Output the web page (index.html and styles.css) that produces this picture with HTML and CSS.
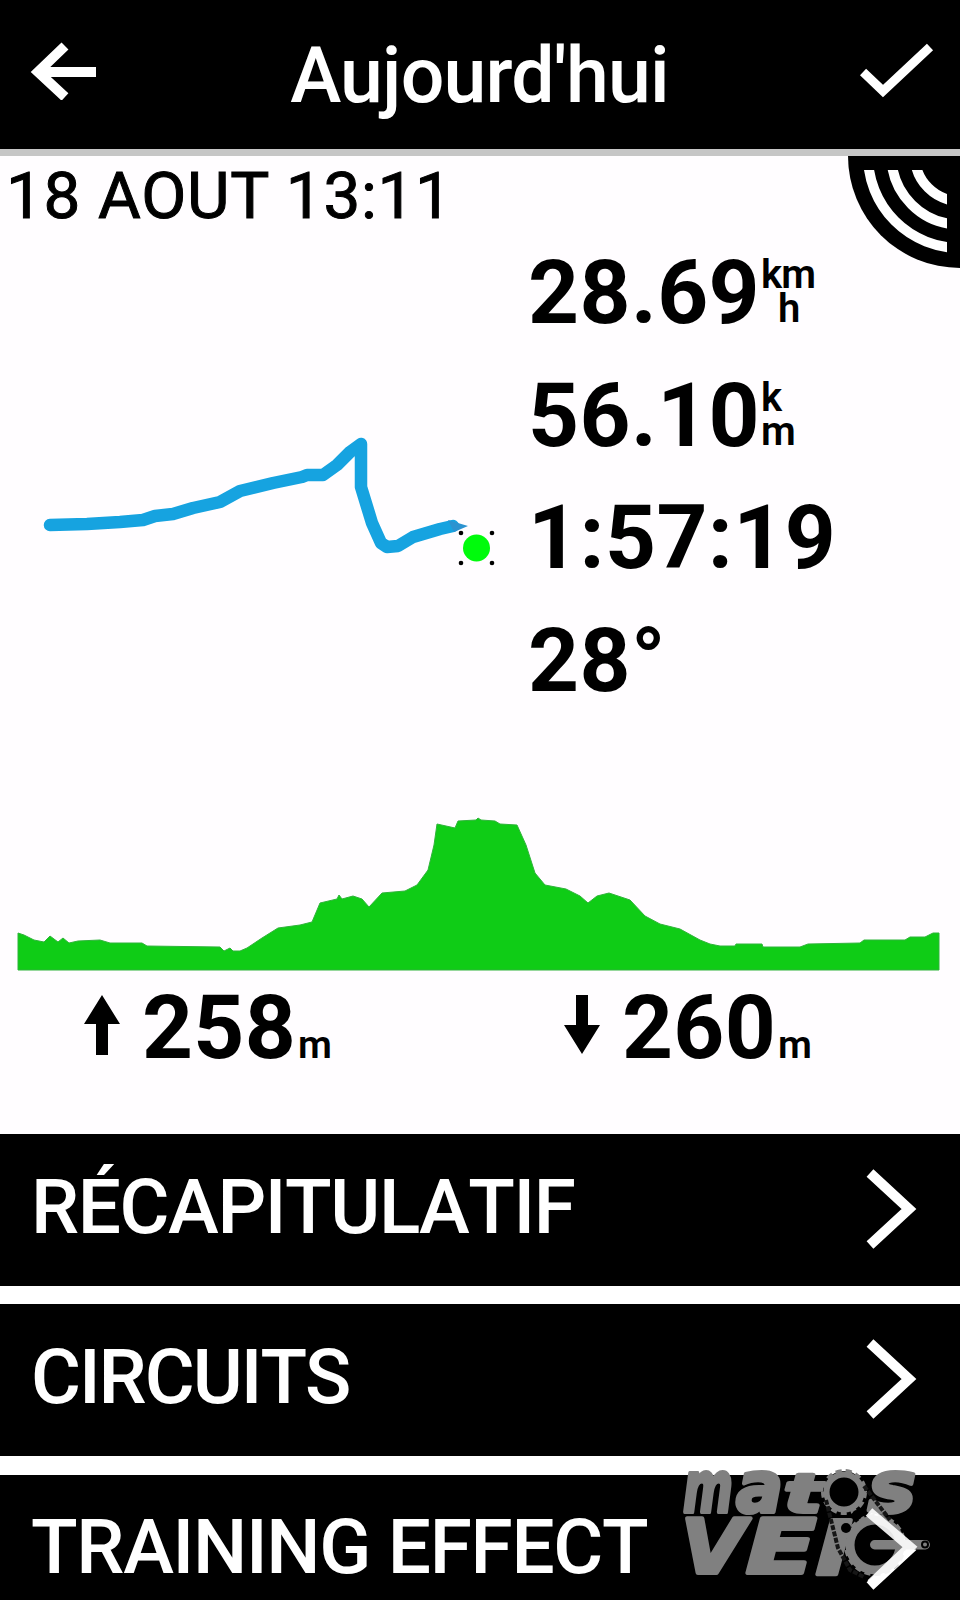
FILE: index.html
```html
<!DOCTYPE html>
<html lang="fr">
<head>
    <meta charset="UTF-8">
    <meta name="viewport" content="width=device-width, initial-scale=1.0">
    <title>Aujourd'hui</title>
    <link rel="stylesheet" href="styles.css">
</head>
<body>
    <header class="topbar">
        <svg class="back" viewBox="0 0 70 60" width="70" height="60">
            <path d="M36 6 L9 32 L36 57 M10 32 H67" />
        </svg>
        <h1>Aujourd'hui</h1>
        <svg class="check" viewBox="0 0 76 60" width="76" height="60">
            <path d="M3 29 L23 48 L70 4" />
        </svg>
    </header>
    <main class="summary">
        <svg class="signal" viewBox="0 0 112 112" width="112" height="112">
            <defs>
                <clipPath id="waves"><rect x="0" y="14" width="99" height="98" /></clipPath>
            </defs>
            <path d="M0 0 H112 V112 A112 112 0 0 1 0 0 Z" />
            <g clip-path="url(#waves)">
                <circle cx="112" cy="0" r="92" />
                <circle cx="112" cy="0" r="68.5" />
                <circle cx="112" cy="0" r="45" />
            </g>
        </svg>
        <p class="date">18 AOUT 13:11</p>
        <div class="ride">
            <svg class="track" viewBox="0 231 528 490" width="528" height="490">
                <polyline points="50,525 87,524 120,522 143,520 155,516 173,514 193,508 220,502 240,491 273,483 302,477 307,475 323,475 337,465 350,452 361,444 361,487 372,523 381,543 387,547 398,546 413,537 440,529 453,526" />
                <path class="tail" d="M448 520 L468 526 L454 532 Z" />
                <circle class="here" cx="476.5" cy="548" r="13.5" />
                <g class="corners">
                    <circle cx="461" cy="533" r="2.3" />
                    <circle cx="492" cy="533" r="2.3" />
                    <circle cx="461" cy="563" r="2.3" />
                    <circle cx="492" cy="563" r="2.3" />
                </g>
            </svg>
            <div class="stats">
                <div class="stat">28.69<span class="unit"><span>km</span><span class="per">h</span></span></div>
                <div class="stat">56.10<span class="unit"><span>k</span><span>m</span></span></div>
                <div class="stat">1:57:19</div>
                <div class="stat">28°</div>
            </div>
        </div>
        <svg class="profile" viewBox="0 810 960 162" width="960" height="162">
            <polygon points="18,970 18,933 24,935 34,940 44,942 50,936 58,942 63,938 69,943 78,941 100,940 110,943 142,943 147,946 220,947 224,951 230,948 233,951 240,951 247,948 262,938 278,928 300,925 312,922 320,903 337,899 339,895 342,899 353,896 362,899 369,907 382,893 405,891 417,885 428,870 434,845 437,824 446,826 455,828 458,821 476,820 478,818 481,820 495,821 500,824 517,825 526,845 535,873 545,885 566,889 580,896 588,903 597,896 609,893 630,900 645,916 660,924 680,929 700,940 710,944 720,946 735,946 736,944 762,944 763,947 800,947 808,944 860,943 864,940 905,940 910,937 925,937 933,933 939,933 939,970" />
        </svg>
        <div class="climbs">
            <div class="climb">
                <svg viewBox="0 0 36 60" width="36" height="60"><path d="M18 0 L36 29 H24 V60 H12 V29 H0 Z" /></svg>
                258<small>m</small>
            </div>
            <div class="climb">
                <svg viewBox="0 0 36 60" width="36" height="60"><path d="M18 59 L36 30 H24 V0 H12 V30 H0 Z" /></svg>
                260<small>m</small>
            </div>
        </div>
    </main>
    <nav class="menu">
        <a class="item recap" href="#recapitulatif">
            <span>RÉCAPITULATIF</span>
            <svg class="chevron" viewBox="0 0 56 84" width="56" height="84"><path d="M7 6 L46 42 L7 78" /></svg>
        </a>
        <a class="item circuits" href="#circuits">
            <span>CIRCUITS</span>
            <svg class="chevron" viewBox="0 0 56 84" width="56" height="84"><path d="M7 6 L46 42 L7 78" /></svg>
        </a>
        <a class="item training" href="#training">
            <span>TRAINING EFFECT</span>
            <svg class="chevron" viewBox="0 0 56 84" width="56" height="84"><path d="M7 6 L46 42 L7 78" /></svg>
        </a>
    </nav>
    <!-- Matos Vélo watermark, both "o" are chainrings -->
    <svg class="watermark" viewBox="676 1464 264 120" width="264" height="120">
        <g class="letters">
            <text x="683" y="1511.5" font-size="72" textLength="50" lengthAdjust="spacingAndGlyphs">m</text>
            <text x="736" y="1511.5" font-size="72" textLength="47" lengthAdjust="spacingAndGlyphs">a</text>
            <text x="784" y="1511.5" font-size="54" textLength="38" lengthAdjust="spacingAndGlyphs">t</text>
            <text x="868" y="1511.5" font-size="72" textLength="48" lengthAdjust="spacingAndGlyphs">s</text>
            <text x="681" y="1572.5" font-size="74" textLength="64" lengthAdjust="spacingAndGlyphs">V</text>
            <text x="746" y="1572.5" font-size="74" textLength="70" lengthAdjust="spacingAndGlyphs">E</text>
            <text x="815" y="1573.5" font-size="72" textLength="34" lengthAdjust="spacingAndGlyphs">l</text>
        </g>
        <circle class="teeth" cx="844" cy="1492" r="21" />
        <circle class="ring" cx="844" cy="1492" r="17.5" />
        <circle class="teeth" cx="875" cy="1545" r="29" />
        <circle class="ring big" cx="875" cy="1545" r="25" />
        <path class="chain" d="M826 1500 L838 1548 L850 1570 L864 1577 M864 1486 L890 1520" />
        <circle class="bolt" cx="846" cy="1528" r="5" />
        <circle class="bolt" cx="857" cy="1515" r="5" />
        <rect class="crank" x="870" y="1540" width="60" height="9.5" rx="4.7" />
        <path class="edge" d="M869 1512 L910 1547 L871 1584" />
        <circle class="pedal" cx="925" cy="1544.5" r="3" />
    </svg>
</body>
</html>
```
FILE: styles.css
```css
body {
    width: 960px;
    height: 1600px;
    margin: 0;
    overflow: hidden;
    position: relative;
    background-color: #fffdff;
    color: #000;
    font-family: Roboto, sans-serif;
}
svg {
    display: block;
    flex: none;
}
.topbar {
    display: flex;
    align-items: center;
    justify-content: space-between;
    height: 149px;
    padding: 0 24px 0 29px;
    background-color: #000;
    border-bottom: 7px solid #c6c6c6;
    color: #fff;
}
.topbar h1 {
    margin: 0;
    padding-top: 3px;
    font-size: 77px;
    font-weight: 500;
    line-height: 90px;
    letter-spacing: -0.8px;
}
.topbar path {
    fill: none;
    stroke: #fff;
}
.back {
    margin-bottom: 10px;
}
.back path {
    stroke-width: 10;
}
.check {
    margin-bottom: 3px;
}
.check path {
    stroke-width: 9;
}
.summary {
    height: 978px;
    position: relative;
}
.signal {
    position: absolute;
    top: 0;
    right: 0;
}
.signal circle {
    fill: none;
    stroke: #fff;
    stroke-width: 10;
}
.date {
    margin: 0;
    padding: 4px 0 0 6px;
    font-size: 65.6px;
    line-height: 71px;
    letter-spacing: 0.7px;
    -webkit-text-stroke: 1px #000;
}
.ride {
    display: flex;
    height: 579px;
}
.track polyline {
    fill: none;
    stroke: #16a3e0;
    stroke-width: 12.5;
    stroke-linecap: round;
    stroke-linejoin: round;
}
.tail {
    fill: #2c93d0;
}
.here {
    fill: #00fb0c;
}
.stats {
    padding-top: 1px;
}
.stat {
    display: flex;
    height: 122.6px;
    font-size: 89px;
    font-weight: 700;
    line-height: 122.6px;
    letter-spacing: 0.4px;
}
.unit {
    display: flex;
    flex-direction: column;
    margin-left: 1px;
    padding-top: 26px;
    font-size: 40px;
    font-weight: 600;
    line-height: 34px;
    letter-spacing: -1px;
}
.per {
    padding-left: 17px;
}
.profile polygon {
    fill: #0fcc16;
    stroke: #2fb43a;
    stroke-width: 1;
}
.climbs {
    display: grid;
    grid-template-columns: 1fr 1fr;
    margin-top: 6px;
}
.climb {
    display: flex;
    align-items: baseline;
    padding-left: 84px;
    font-size: 89px;
    font-weight: 700;
    line-height: 100px;
    letter-spacing: 0.3px;
}
.climb svg {
    margin-right: 22px;
    align-self: flex-start;
    margin-top: 17px;
}
.climb small {
    margin-left: 2px;
    font-size: 39px;
    font-weight: 600;
}
.menu {
    display: flex;
    flex-direction: column;
    gap: 18.3px;
    background-color: #fff;
}
.item {
    display: flex;
    align-items: center;
    justify-content: space-between;
    height: 152px;
    padding: 0 41px 0 31px;
    background-color: #000;
    color: #fff;
    font-size: 76.5px;
    font-weight: 500;
    font-kerning: none;
    text-decoration: none;
    white-space: nowrap;
}
.item span {
    padding-bottom: 7px;
}
.recap {
    letter-spacing: -1.4px;
}
.circuits {
    letter-spacing: -2px;
}
.training {
    letter-spacing: -1.3px;
}
.chevron {
    margin-bottom: 2px;
}
.chevron path {
    fill: none;
    stroke: #fff;
    stroke-width: 10;
}
.watermark {
    position: absolute;
    left: 676px;
    top: 1464px;
    overflow: visible;
}
.letters {
    fill: #808080;
    stroke: #808080;
    stroke-width: 4;
    stroke-linejoin: round;
    font-family: "DejaVu Sans", sans-serif;
    font-style: italic;
    font-weight: 700;
}
.chain {
    fill: none;
    stroke: #161616;
    stroke-width: 4;
    stroke-dasharray: 5 1.5;
}
.teeth {
    fill: #000;
    stroke: #808080;
    stroke-width: 4;
    stroke-dasharray: 6 4;
}
.ring {
    fill: #000;
    stroke: #808080;
    stroke-width: 6;
}
.big {
    stroke-width: 9;
}
.bolt {
    fill: #000;
}
.crank {
    fill: #808080;
}
.pedal {
    fill: none;
    stroke: #000;
    stroke-width: 2;
}
.edge {
    fill: none;
    stroke: #fff;
    stroke-width: 10;
    opacity: 0.9;
}
```
